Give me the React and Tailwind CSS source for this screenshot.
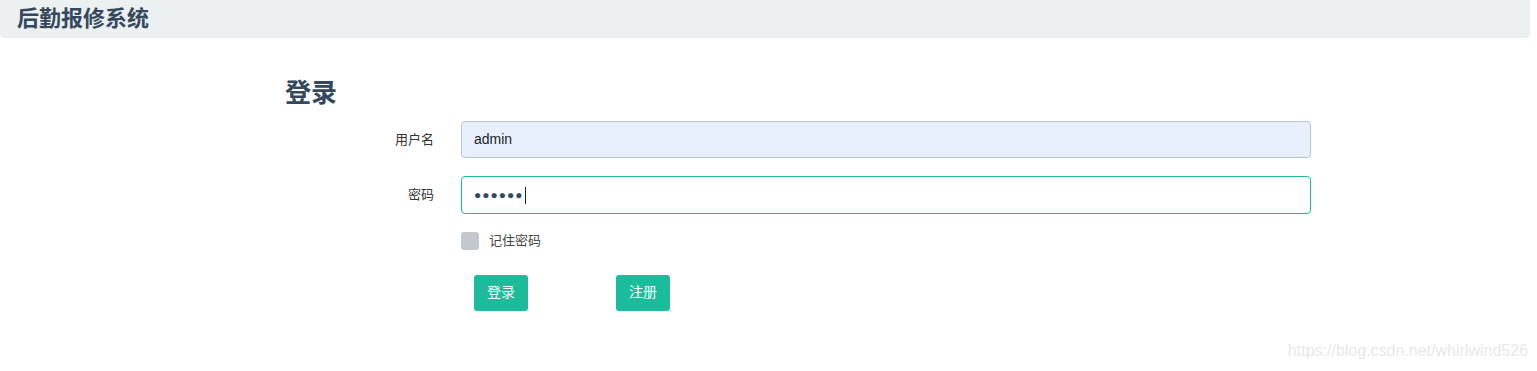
export default function App() {
  return (
    <div className="relative w-[1537px] h-[371px] bg-white font-['Liberation_Sans','Noto_Sans_CJK_SC',sans-serif] overflow-hidden">
      <header className="h-[38px] w-[1530px] bg-[#ecf0f1] rounded-b-[4px] flex items-center pl-[17px]">
        <h1 className="text-[22px] font-bold text-[#34495e] leading-none">后勤报修系统</h1>
      </header>

      <main className="pl-[285px] pt-[40px]">
        <h2 className="text-[26px] font-bold text-[#34495e] leading-[30px]">登录</h2>

        <form className="mt-[13px] w-[1026px]">
          <div className="flex items-center h-[37px]">
            <label className="w-[149px] text-right text-[13px] text-[#333]">用户名</label>
            <div className="ml-[27px] flex-1 h-full rounded-[4px] border border-[#bcc3cc] bg-[#e8f0fe] flex items-center px-[12px] text-[14px] text-[#222]">
              admin
            </div>
          </div>

          <div className="flex items-center h-[38px] mt-[18px]">
            <label className="w-[149px] text-right text-[13px] text-[#333]">密码</label>
            <div className="ml-[27px] flex-1 h-full rounded-[4px] border border-[#1abc9c] bg-white flex items-center px-[12px]">
              <span className="text-[12px] tracking-[1px] text-[#34495e] leading-none">●●●●●●</span>
              <span className="w-px h-[17px] bg-[#222] ml-px" />
            </div>
          </div>

          <div className="flex items-center ml-[176px] mt-[17px]">
            <span className="w-[18px] h-[18px] rounded-[3px] bg-[#c3c8ce]" />
            <span className="ml-[10px] text-[13px] text-[#444]">记住密码</span>
          </div>

          <div className="flex ml-[189px] mt-[24px] gap-[88px]">
            <button type="button" className="w-[54px] h-[36px] rounded-[3px] bg-[#1abc9c] text-white text-[14px]">登录</button>
            <button type="button" className="w-[54px] h-[36px] rounded-[3px] bg-[#1abc9c] text-white text-[14px]">注册</button>
          </div>
        </form>
      </main>

      <span className="absolute right-[9px] bottom-[8px] text-[16px] text-[#e8e8e8]">https://blog.csdn.net/whirlwind526</span>
    </div>
  );
}
